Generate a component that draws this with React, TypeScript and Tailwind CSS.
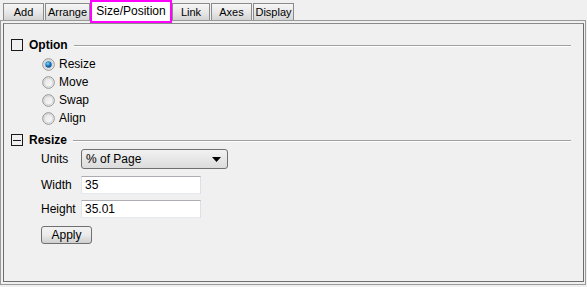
import React from "react";

const tabs: { label: string; w: number }[] = [
  { label: "Add", w: 41 },
  { label: "Arrange", w: 45 },
  { label: "Size/Position", w: 0 },
  { label: "Link", w: 38 },
  { label: "Axes", w: 41 },
  { label: "Display", w: 41 },
];

function Radio({ checked }: { checked?: boolean }) {
  return (
    <svg width="13" height="13" viewBox="0 0 13 13">
      <defs>
        <linearGradient id="rb" x1="0" y1="0" x2="1" y2="1">
          <stop offset="0" stopColor="#e0e0e0" />
          <stop offset="1" stopColor="#ffffff" />
        </linearGradient>
        <radialGradient id="rd" cx="0.4" cy="0.35" r="0.7">
          <stop offset="0" stopColor="#8fd4f5" />
          <stop offset="0.5" stopColor="#1b7fc4" />
          <stop offset="1" stopColor="#0b3f78" />
        </radialGradient>
      </defs>
      <circle cx="6.5" cy="6.5" r="5.8" fill="url(#rb)" stroke="#8e8f8f" strokeWidth="1" />
      <circle cx="6.5" cy="6.5" r="4.3" fill="none" stroke="#d4d4d4" strokeWidth="1" />
      {checked && <circle cx="6.5" cy="6.5" r="3.2" fill="url(#rd)" />}
    </svg>
  );
}

function SectionHeader({ title, minus }: { title: string; minus?: boolean }) {
  return (
    <div className="flex items-center h-[14px]">
      <div className="w-[12px] h-[12px] border border-[#1a1a1a] bg-[#f0f0f0] flex items-center justify-center">
        {minus && <div className="w-[8px] h-[1px] bg-[#1a1a1a]" />}
      </div>
      <span className="ml-[6px] font-bold text-[12px] text-black leading-none">{title}</span>
      <div className="flex-1 ml-[6px] mt-[1px] flex flex-col">
        <div className="h-[1px] bg-[#a0a0a0]" />
        <div className="h-[1px] bg-white" />
      </div>
    </div>
  );
}

export default function App() {
  return (
    <div
      className="w-[587px] h-[287px] bg-[#f0f0f0] relative text-[11px] text-black overflow-hidden"
      style={{ fontFamily: '"Liberation Sans", Arial, sans-serif' }}
    >
      <div className="flex items-end h-[20px] pl-[3px] gap-[1px]">
        {tabs.map((t) =>
          t.label === "Size/Position" ? (
            <div
              key={t.label}
              className="relative z-10 -ml-[1px] -mr-[1px] self-start h-[23px] w-[82px] bg-white border-2 border-[#ff00ff] flex items-center justify-center text-[12px] pb-[2px]"
            >
              {t.label}
            </div>
          ) : (
            <div
              key={t.label}
              className="h-[17px] border border-b-0 border-[#8a8a8a] bg-gradient-to-b from-[#f6f6f6] via-[#e8e8e8] to-[#d4d4d4] flex items-center justify-center text-[11px] leading-none"
              style={{ width: t.w }}
            >
              {t.label}
            </div>
          )
        )}
      </div>
      <div className="absolute left-0 right-[1px] top-[20px] bottom-[2px] border border-[#9a9a9a] p-[2px] pr-[1px]">
        <div className="w-full h-full border border-[#6e6e6e] border-t-[#8a8a8a] pt-[14px] pl-[7px] pr-[12px]">
          <SectionHeader title="Option" />
          <div className="pl-[31px] mt-[3px] flex flex-col">
            {["Resize", "Move", "Swap", "Align"].map((r, i) => (
              <div key={r} className="flex items-center h-[18px]">
                <Radio checked={i === 0} />
                <span className="ml-[4px] text-[12px]">{r}</span>
              </div>
            ))}
          </div>
          <div className="mt-[6px]">
            <SectionHeader title="Resize" minus />
          </div>
          <div className="pl-[30px] mt-[2px]">
            <div className="flex items-center h-[20px]">
              <span className="w-[40px] text-[12px]">Units</span>
              <div className="w-[147px] h-[20px] border border-[#707070] rounded-[3px] bg-gradient-to-b from-[#f2f2f2] to-[#dcdcdc] flex items-center pl-[4px] pr-[6px]">
                <span className="flex-1 text-[12px]">% of Page</span>
                <svg width="9" height="5" viewBox="0 0 9 5">
                  <path d="M0 0 H9 L4.5 5 Z" fill="#000" />
                </svg>
              </div>
            </div>
            <div className="flex items-center h-[18px] mt-[7px]">
              <span className="w-[40px] text-[12px]">Width</span>
              <div className="w-[120px] h-[18px] border border-[#abadb3] border-r-[#dbdfe6] border-b-[#e3e9ef] border-l-[#e2e3ea] bg-white flex items-center pl-[3px] text-[12px]">
                35
              </div>
            </div>
            <div className="flex items-center h-[18px] mt-[6px]">
              <span className="w-[40px] text-[12px]">Height</span>
              <div className="w-[120px] h-[18px] border border-[#abadb3] border-r-[#dbdfe6] border-b-[#e3e9ef] border-l-[#e2e3ea] bg-white flex items-center pl-[3px] text-[12px]">
                35.01
              </div>
            </div>
            <div className="mt-[8px] w-[51px] h-[18px] border border-[#707070] rounded-[3px] bg-gradient-to-b from-[#f2f2f2] via-[#ebebeb] to-[#cfcfcf] flex items-center justify-center text-[12px]">
              Apply
            </div>
          </div>
        </div>
      </div>
    </div>
  );
}
